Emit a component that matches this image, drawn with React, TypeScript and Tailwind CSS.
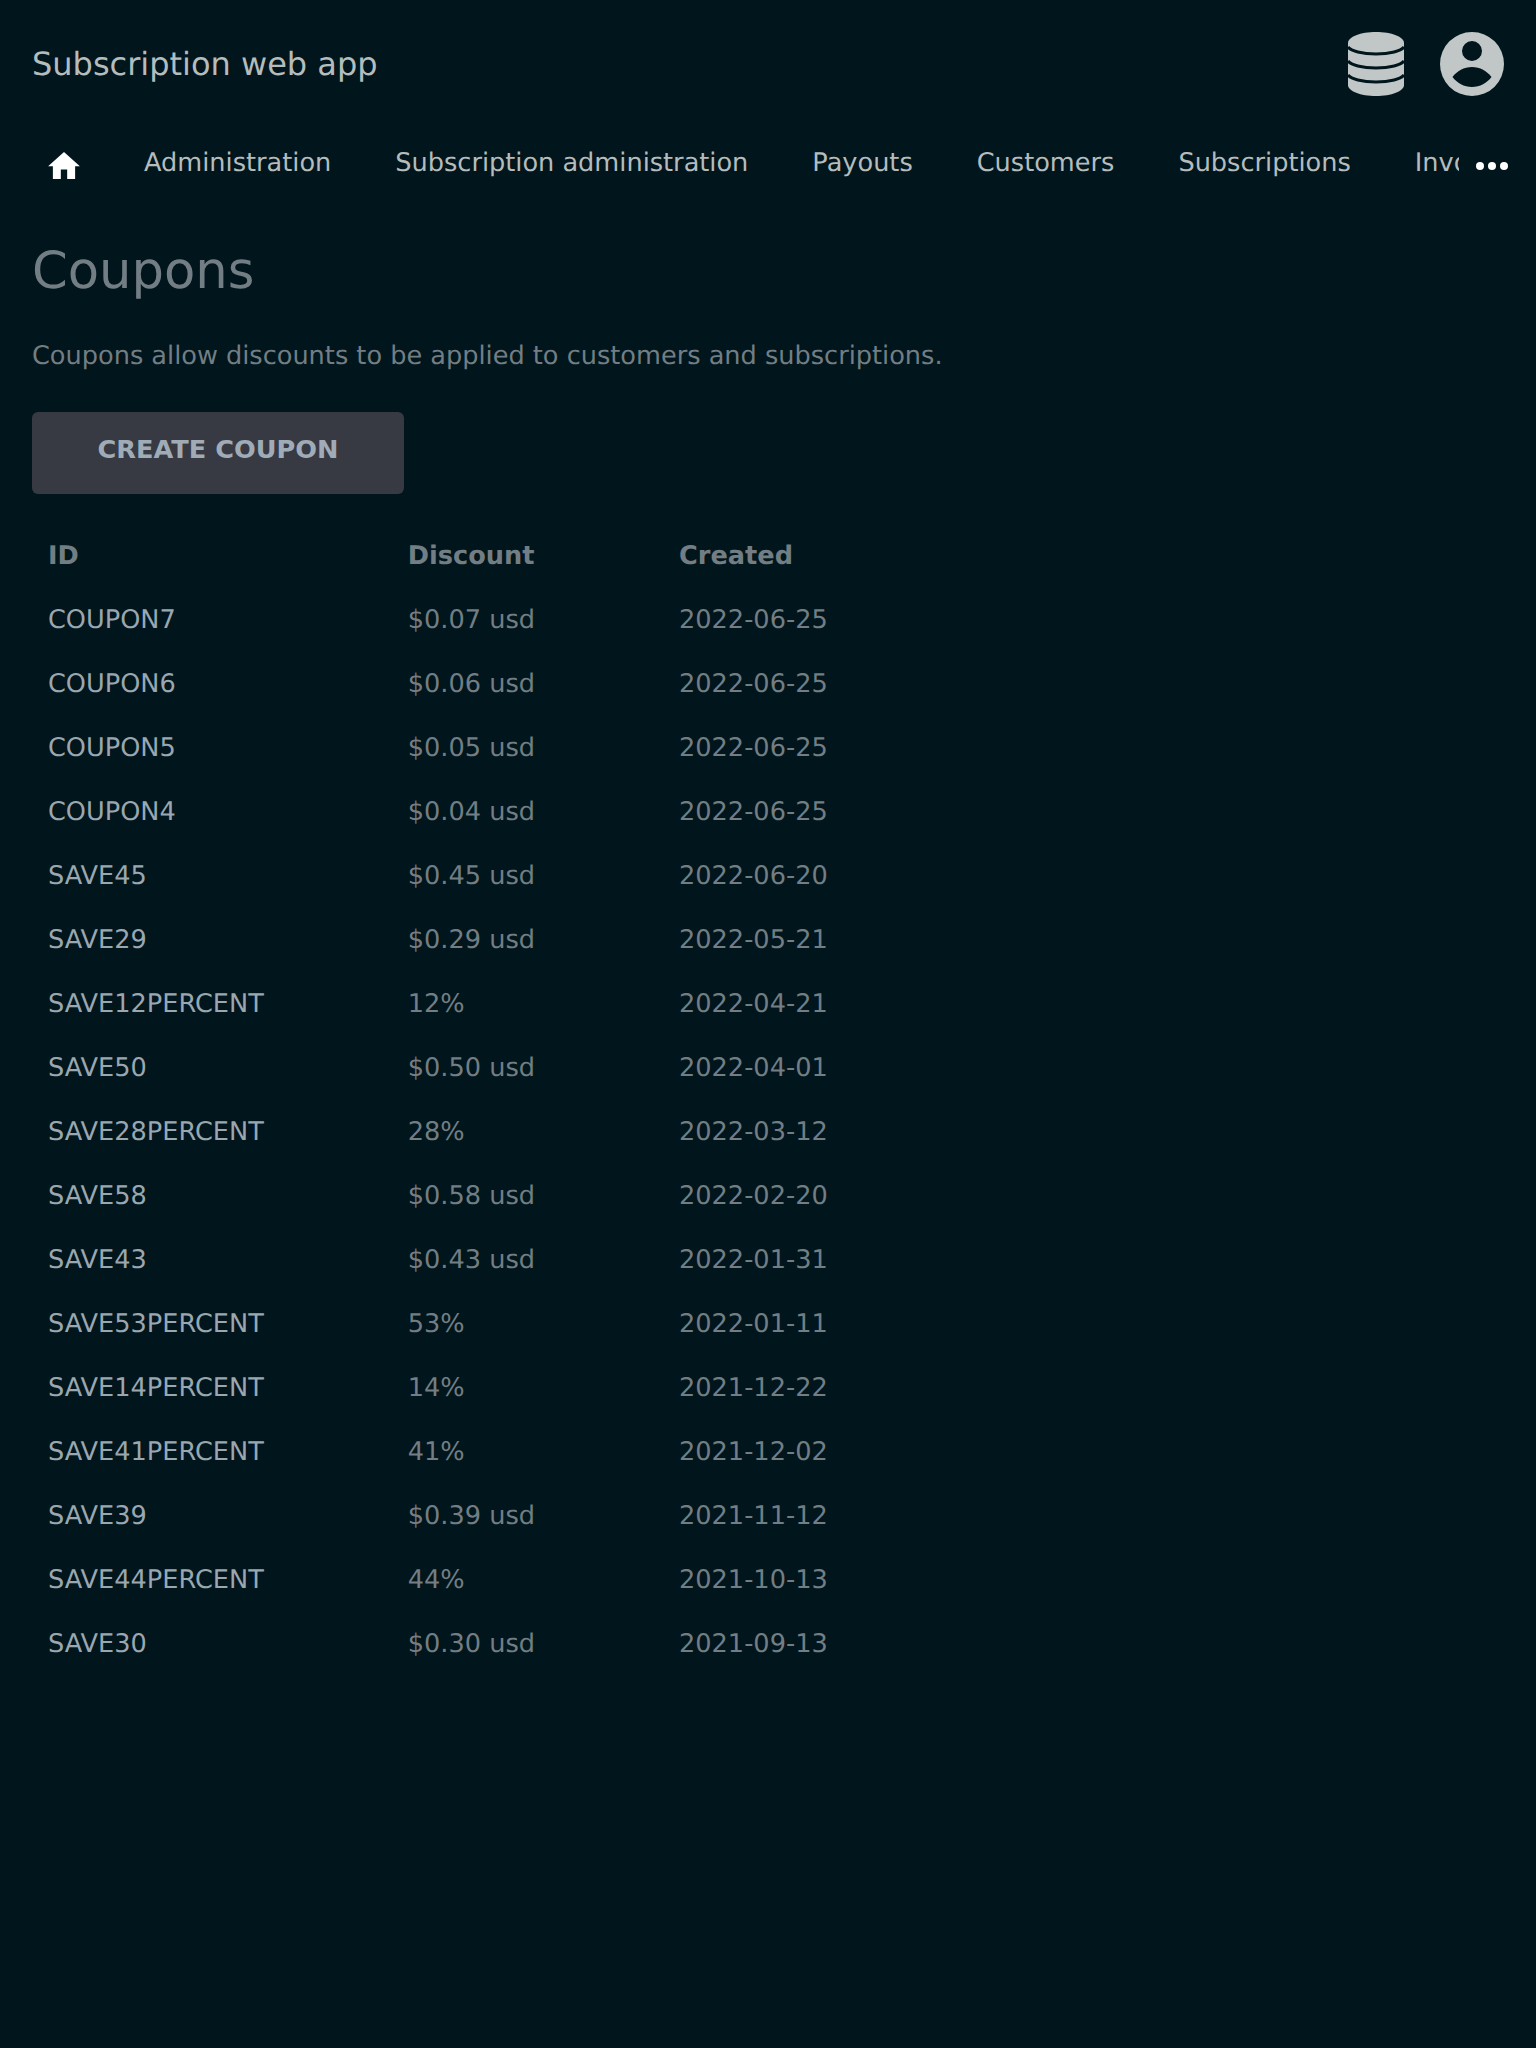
const NAV_ITEMS = ["Administration", "Subscription administration", "Payouts", "Customers", "Subscriptions", "Invoices"];

const COUPONS = [
  ["COUPON7", "$0.07 usd", "2022-06-25"],
  ["COUPON6", "$0.06 usd", "2022-06-25"],
  ["COUPON5", "$0.05 usd", "2022-06-25"],
  ["COUPON4", "$0.04 usd", "2022-06-25"],
  ["SAVE45", "$0.45 usd", "2022-06-20"],
  ["SAVE29", "$0.29 usd", "2022-05-21"],
  ["SAVE12PERCENT", "12%", "2022-04-21"],
  ["SAVE50", "$0.50 usd", "2022-04-01"],
  ["SAVE28PERCENT", "28%", "2022-03-12"],
  ["SAVE58", "$0.58 usd", "2022-02-20"],
  ["SAVE43", "$0.43 usd", "2022-01-31"],
  ["SAVE53PERCENT", "53%", "2022-01-11"],
  ["SAVE14PERCENT", "14%", "2021-12-22"],
  ["SAVE41PERCENT", "41%", "2021-12-02"],
  ["SAVE39", "$0.39 usd", "2021-11-12"],
  ["SAVE44PERCENT", "44%", "2021-10-13"],
  ["SAVE30", "$0.30 usd", "2021-09-13"],
];

function DatabaseIcon() {
  return (
    <svg viewBox="0 0 56 64" className="h-16 w-14">
      <path
        fill="#c1c7c7"
        d="M28 0C12.5 0 0 4.9 0 11v42c0 6.100 12.500 11 28 11s28-4.900 28-11V11C56 4.900 43.500 0 28 0z"
      />
      <g fill="none" stroke="#01151c" strokeWidth="3">
        <path d="M0 15c3 4 14 7 28 7s25-3 28-7" />
        <path d="M0 29c3 4 14 7 28 7s25-3 28-7" />
        <path d="M0 43c3 4 14 7 28 7s25-3 28-7" />
      </g>
    </svg>
  );
}

function UserIcon() {
  return (
    <svg viewBox="0 0 64 64" className="h-16 w-16">
      <path
        fill="#c1c7c7"
        fillRule="evenodd"
        d="M32 0a32 32 0 1 0 0 64a32 32 0 1 0 0-64zM32 9a10 10 0 1 1 0 20a10 10 0 1 1 0-20zM12.500 45C17 39 24 35 32 35s15 4 19.500 10C47 51 40 55 32 55s-15-4-19.500-10z"
      />
    </svg>
  );
}

function HomeIcon() {
  return (
    <svg viewBox="2 3 20 17" className="h-[27px] w-8 fill-white">
      <path d="M10 20v-6h4v6h5v-8h3L12 3 2 12h3v8z" />
    </svg>
  );
}

export default function App() {
  return (
    <div className="min-h-[2048px] bg-[#01151c] font-['DejaVu_Sans',sans-serif] text-[25.6px] [text-rendering:geometricPrecision]">
      <header className="flex h-[128px] items-center justify-between pl-8 pr-8">
        <span className="text-[32px] text-[#b5bcbc]">Subscription web app</span>
        <div className="flex items-center gap-[36px]">
          <DatabaseIcon />
          <UserIcon />
        </div>
      </header>

      <nav className="flex h-[76px] items-center pl-8 pr-7">
        <div className="flex flex-1 items-center overflow-hidden">
          <a className="flex shrink-0 items-center pl-4 pr-8">
            <HomeIcon />
          </a>
          {NAV_ITEMS.map((item) => (
            <a key={item} className="shrink-0 whitespace-nowrap px-8 pb-[5px] text-[#b5bcbc]">
              {item}
            </a>
          ))}
        </div>
        <div className="ml-[17px] flex items-center gap-[4px]">
          <span className="h-2 w-2 rounded-full bg-white" />
          <span className="h-2 w-2 rounded-full bg-white" />
          <span className="h-2 w-2 rounded-full bg-white" />
        </div>
      </nav>

      <main className="px-8 pt-[31px]">
        <h2 className="text-[51.2px] leading-[72px] text-[#727e83]">Coupons</h2>
        <p className="mt-[31px] leading-9 text-[#727e83]">
          Coupons allow discounts to be applied to customers and subscriptions.
        </p>
        <button className="mt-[38px] block h-[82px] w-[372px] rounded-md bg-[#373a42] pb-2 font-bold uppercase text-[#a0abb8]">
          Create coupon
        </button>
        <table className="mt-[30px] border-collapse text-left">
          <thead>
            <tr className="h-16">
              <th className="pl-4 pr-32 font-bold text-[#727e83]">ID</th>
              <th className="pl-4 pr-32 font-bold text-[#727e83]">Discount</th>
              <th className="pl-4 pr-32 font-bold text-[#727e83]">Created</th>
            </tr>
          </thead>
          <tbody>
            {COUPONS.map(([id, discount, created]) => (
              <tr key={id} className="h-16">
                <td className="pl-4 pr-32 text-[#9aa7b0]">{id}</td>
                <td className="pl-4 pr-32 text-[#727e83]">{discount}</td>
                <td className="pl-4 pr-32 text-[#727e83]">{created}</td>
              </tr>
            ))}
          </tbody>
        </table>
      </main>
    </div>
  );
}
